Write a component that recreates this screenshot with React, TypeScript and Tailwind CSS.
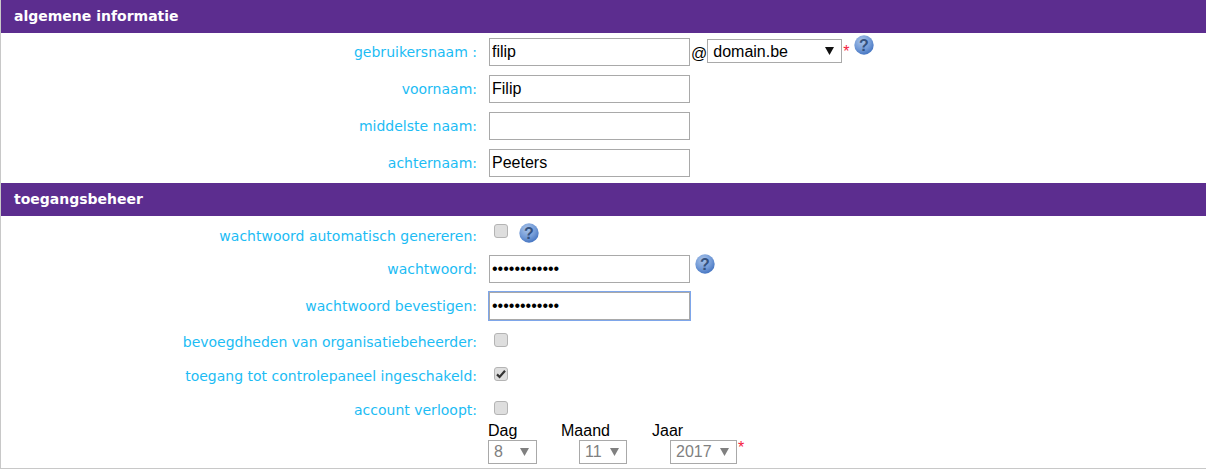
import React from 'react';

const labelClass = 'w-[476px] shrink-0 text-right text-[14px] leading-[17px] text-[#1cbcf4] font-["DejaVu_Sans",Verdana,sans-serif]';
const inputClass = 'w-[201px] h-[28px] shrink-0 border border-[#a9a9a9] bg-white px-[2px] text-[16px] text-black font-["Liberation_Sans",Arial,sans-serif] outline-none';

const HelpIcon = ({ id }: { id: string }) => (
  <svg width="20" height="20" viewBox="0 0 20 20" className="shrink-0">
    <defs>
      <radialGradient id={id} cx="40%" cy="30%" r="75%">
        <stop offset="0%" stopColor="#a9c4ea" />
        <stop offset="60%" stopColor="#7199d6" />
        <stop offset="100%" stopColor="#3f70bf" />
      </radialGradient>
    </defs>
    <circle cx="10" cy="10" r="9.7" fill={`url(#${id})`} />
    <text x="10" y="15.5" textAnchor="middle" fontSize="16" fontWeight="700" fill="#34527f" fontFamily="Liberation Sans, Arial, sans-serif">?</text>
  </svg>
);

const Checkbox = ({ checked }: { checked?: boolean }) => (
  <span className="relative block w-[14px] h-[14px] rounded-[3px] border border-[#b4b4b4] bg-[#dedede]">
    {checked && (
      <svg viewBox="0 0 14 14" className="absolute -left-px -top-px w-[14px] h-[14px]">
        <path d="M3 7.4 L5.6 10 L11 3.8" fill="none" stroke="#333" strokeWidth="2.2" />
      </svg>
    )}
  </span>
);

const Select = ({ value, w, h, disabled }: { value: string; w: string; h: string; disabled?: boolean }) => (
  <span className={`relative block shrink-0 ${w} ${h}`}>
    <select
      disabled={disabled}
      defaultValue={value}
      className={`appearance-none w-full h-full border border-[#a9a9a9] bg-white pl-[5px] text-[16px] font-["Liberation_Sans",Arial,sans-serif] outline-none ${disabled ? 'text-[#808080]' : 'text-black'}`}
    >
      <option>{value}</option>
    </select>
    <svg viewBox="0 0 9 8" className="absolute right-[8px] top-1/2 -translate-y-1/2 w-[9px] h-[8px]">
      <path d="M0 0 H9 L4.5 8 Z" fill={disabled ? '#808080' : '#111'} />
    </svg>
  </span>
);

const Star = () => <span className="text-[#f5213c] text-[16px] font-['Liberation_Sans',Arial,sans-serif]">*</span>;

const SectionBar = ({ title }: { title: string }) => (
  <div className="h-[33px] bg-[#5c2d8f] pl-[13px] flex items-center text-[14px] font-bold text-white font-['DejaVu_Sans',Verdana,sans-serif]">
    {title}
  </div>
);

const Row = ({ label, children }: { label: string; children?: React.ReactNode }) => (
  <div className="flex items-center gap-[12px]">
    <label className={labelClass}>{label}</label>
    {children}
  </div>
);

export default function App() {
  return (
    <div className="w-[1206px] h-[469px] bg-white overflow-hidden border-l border-[#c8c8c8]">
      <SectionBar title="algemene informatie" />
      <div className="flex flex-col gap-[9px] pt-[5px] pb-[6px]">
        <Row label="gebruikersnaam :">
          <div className="flex items-start">
            <input className={inputClass} defaultValue="filip" />
            <span className="ml-px mt-[4px] text-[16px] text-black font-['Liberation_Sans',Arial,sans-serif]">@</span>
            <Select value="domain.be" w="w-[135px]" h="h-[24px] mt-[1px]" />
            <span className="ml-px mt-[1px]"><Star /></span>
            <span className="ml-[5px] -mt-[3px]"><HelpIcon id="h1" /></span>
          </div>
        </Row>
        <Row label="voornaam:"><input className={inputClass} defaultValue="Filip" /></Row>
        <Row label="middelste naam:"><input className={inputClass} /></Row>
        <Row label="achternaam:"><input className={inputClass} defaultValue="Peeters" /></Row>
      </div>
      <SectionBar title="toegangsbeheer" />
      <div className="flex flex-col">
        <div className="h-[39px] flex items-start gap-[12px] pt-[12px]">
          <label className={labelClass}>wachtwoord automatisch genereren:</label>
          <div className="flex items-start pl-[5px] -mt-[4px]">
            <span className="mt-[0px] pt-[0px]"><Checkbox /></span>
            <span className="ml-[11px] -mt-[1px]"><HelpIcon id="h2" /></span>
          </div>
        </div>
        <div className="flex items-center gap-[12px] h-[28px]">
          <label className={labelClass}>wachtwoord:</label>
          <input type="password" className={inputClass} defaultValue="filippeeters" />
          <span className="-ml-[7px] -mt-[10px]"><HelpIcon id="h3" /></span>
        </div>
        <div className="flex items-center gap-[12px] h-[28px] mt-[9px]">
          <label className={labelClass}>wachtwoord bevestigen:</label>
          <input type="password" className={`${inputClass} border-[#7ea6ea] shadow-[0_0_0_1px_#7ea6ea]`} defaultValue="filippeeters" />
        </div>
        <div className="flex flex-col gap-[20px] pt-[13px]">
          <CheckRow label="bevoegdheden van organisatiebeheerder:" />
          <CheckRow label="toegang tot controlepaneel ingeschakeld:" checked />
          <CheckRow label="account verloopt:" />
        </div>
        <div className="ml-[487px] mt-[8px] flex text-[16px] leading-[16px] text-black font-['Liberation_Sans',Arial,sans-serif]">
          <div className="w-[91px] flex flex-col gap-[1px]">
            <span>Dag</span>
            <Select value="8" w="w-[49px]" h="h-[24px]" disabled />
          </div>
          <div className="w-[91px] flex flex-col gap-[1px]">
            <span className="-ml-[18px]">Maand</span>
            <Select value="11" w="w-[48px]" h="h-[24px]" disabled />
          </div>
          <div className="flex flex-col gap-[1px]">
            <span className="-ml-[18px]">Jaar</span>
            <div className="flex items-start">
              <Select value="2017" w="w-[67px]" h="h-[24px]" disabled />
              <span className="ml-px"><Star /></span>
            </div>
          </div>
        </div>
        <div className="mt-[4px] h-px bg-[#c8c8c8]" />
      </div>
    </div>
  );
}

function CheckRow({ label, checked }: { label: string; checked?: boolean }) {
  return (
    <div className="flex items-start gap-[12px] h-[14px]">
      <label className={`${labelClass} mt-[1px]`}>{label}</label>
      <span className="pl-[5px]"><Checkbox checked={checked} /></span>
    </div>
  );
}
